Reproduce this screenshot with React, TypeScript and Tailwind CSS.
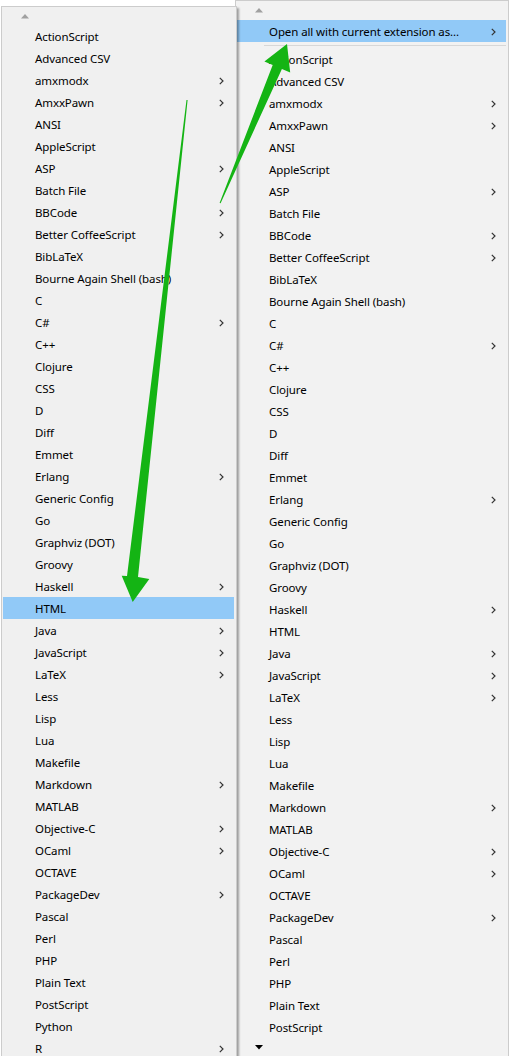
const ITEMS: [string, boolean][] = [
  ["ActionScript", false],
  ["Advanced CSV", false],
  ["amxmodx", true],
  ["AmxxPawn", true],
  ["ANSI", false],
  ["AppleScript", false],
  ["ASP", true],
  ["Batch File", false],
  ["BBCode", true],
  ["Better CoffeeScript", true],
  ["BibLaTeX", false],
  ["Bourne Again Shell (bash)", false],
  ["C", false],
  ["C#", true],
  ["C++", false],
  ["Clojure", false],
  ["CSS", false],
  ["D", false],
  ["Diff", false],
  ["Emmet", false],
  ["Erlang", true],
  ["Generic Config", false],
  ["Go", false],
  ["Graphviz (DOT)", false],
  ["Groovy", false],
  ["Haskell", true],
  ["HTML", false],
  ["Java", true],
  ["JavaScript", true],
  ["LaTeX", true],
  ["Less", false],
  ["Lisp", false],
  ["Lua", false],
  ["Makefile", false],
  ["Markdown", true],
  ["MATLAB", false],
  ["Objective-C", true],
  ["OCaml", true],
  ["OCTAVE", false],
  ["PackageDev", true],
  ["Pascal", false],
  ["Perl", false],
  ["PHP", false],
  ["Plain Text", false],
  ["PostScript", false],
  ["Python", false],
  ["R", true],
];

const Chevron = () => (
  <svg width="5" height="8" viewBox="0 0 5 8" className="shrink-0">
    <polyline points="0.8,0.8 4,4 0.8,7.2" fill="none" stroke="#333" strokeWidth="1.2" />
  </svg>
);

const Tri = ({ down, color }: { down?: boolean; color: string }) => (
  <svg width="8" height="5" viewBox="0 0 8 5">
    <polygon points={down ? "0,0 8,0 4,4.5" : "0,4.5 8,4.5 4,0"} fill={color} />
  </svg>
);

const Row = ({ label, sub, active }: { label: string; sub: boolean; active?: boolean }) => (
  <div
    className={`ml-px mr-[2px] flex h-[22px] items-center justify-between pl-[32px] pr-[10px] pt-[2px] ${
      active ? "bg-[#91c9f7]" : ""
    }`}
  >
    <span className="whitespace-nowrap">{label}</span>
    {sub && <Chevron />}
  </div>
);

const Arrows = () => (
  <svg className="pointer-events-none absolute inset-0 z-20" width="510" height="1056">
    <polygon
      points="186.5,100 187.6,100 138,577 149.3,579 132.7,602 121.7,575.7 127,576"
      fill="#14b414"
    />
    <polygon
      points="219.6,203 220.6,203.3 281.9,68.9 290.2,72.4 287,44 264.4,61.6 272.7,65"
      fill="#14b414"
    />
  </svg>
);

export default function App() {
  const rightItems = ITEMS.slice(0, 45);
  return (
    <div className="relative h-[1056px] w-[510px] overflow-hidden bg-white text-[11.5px] tracking-[-0.1px] text-black font-['Segoe_UI','Noto_Sans',sans-serif]">
      {/* submenu, sits under the main menu */}
      <div className="absolute left-[235px] top-0 w-[274px] border border-[#cccccc] bg-[#f2f2f2]">
        <div className="flex h-[19px] items-center pl-[19px]">
          <Tri color="#a0a0a0" />
        </div>
        <Row label="Open all with current extension as..." sub active />
        <div className="flex h-[6px] items-center pl-[28px] pr-[2px]">
          <div className="h-px w-full bg-[#d7d7d7]" />
        </div>
        {rightItems.map(([l, s]) => (
          <Row key={l} label={l} sub={s} />
        ))}
        <div className="flex h-[18px] items-center pl-[19px]">
          <Tri down color="#000" />
        </div>
      </div>

      {/* main menu */}
      <div className="relative z-10 ml-px mt-[6px] w-[236px] border border-[#cccccc] bg-[#f0f0f0] shadow-[2px_2px_2px_rgba(0,0,0,0.35)]">
        <div className="flex h-[18px] items-center pl-[19px]">
          <Tri color="#a0a0a0" />
        </div>
        {ITEMS.map(([l, s]) => (
          <Row key={l} label={l} sub={s} active={l === "HTML"} />
        ))}
      </div>

      <Arrows />
    </div>
  );
}
